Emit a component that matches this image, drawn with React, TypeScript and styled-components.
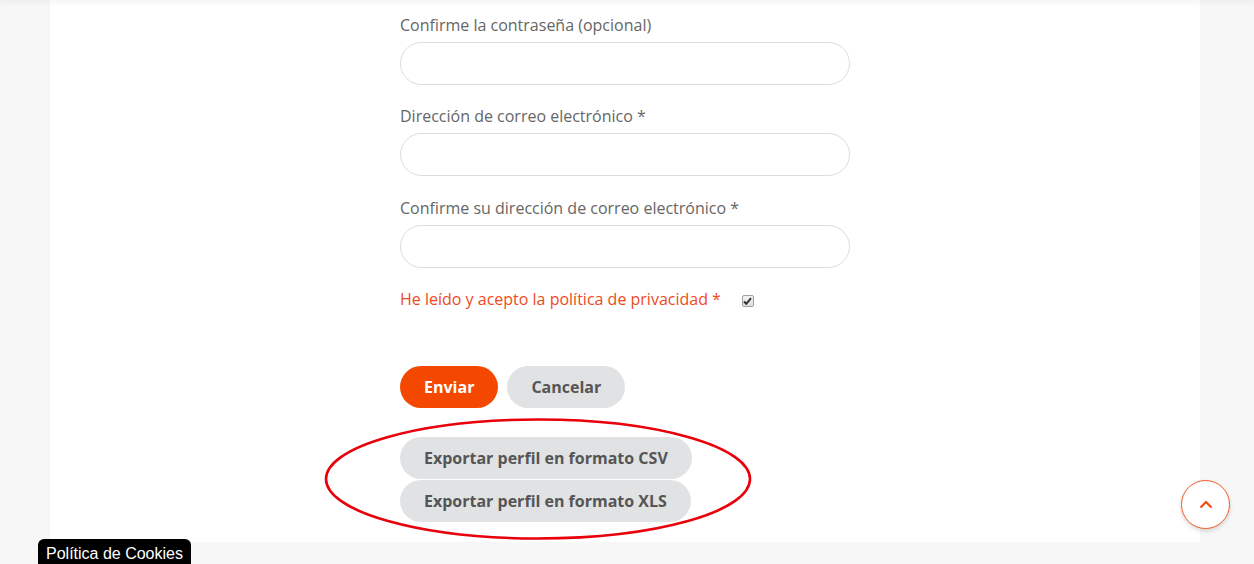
import { styled, createGlobalStyle } from "styled-components"

const Global = createGlobalStyle`
  html, body {
    margin: 0;
    padding: 0;
    height: 564px;
    overflow: hidden;
    background: #f7f7f7;
    font-family: "Open Sans", "Liberation Sans", sans-serif;
  }
  * { box-sizing: border-box; }
`

const fields = [
  "Confirme la contraseña (opcional)",
  "Dirección de correo electrónico *",
  "Confirme su dirección de correo electrónico *",
]

const App = () => {
  return (
    <Page>
      <Global />
      <Panel>
        <Form>
          {fields.map((f) => (
            <Field key={f}>
              <Label>{f}</Label>
              <Input type="text" />
            </Field>
          ))}
          <Privacy>
            <PrivacyText>He leído y acepto la política de privacidad *</PrivacyText>
            <Check>
              <svg width="9" height="8" viewBox="0 0 9 8">
                <path d="M1 4.5 L3.3 6.8 L8 1.2" fill="none" stroke="#333" strokeWidth="2" />
              </svg>
            </Check>
          </Privacy>
          <Actions>
            <Button $primary>Enviar</Button>
            <Button>Cancelar</Button>
          </Actions>
          <Exports>
            <Mark width="430" height="126" viewBox="0 0 430 126">
              <ellipse cx="215" cy="61" rx="212" ry="59.5" fill="none" stroke="#e8000b" strokeWidth="2.6" />
            </Mark>
            <Button>Exportar perfil en formato CSV</Button>
            <Button>Exportar perfil en formato XLS</Button>
          </Exports>
        </Form>
      </Panel>
      <ToTop>
        <svg width="14" height="9" viewBox="0 0 14 9">
          <path d="M1.5 7.5 L7 2 L12.5 7.5" fill="none" stroke="#f24a12" strokeWidth="2.2" />
        </svg>
      </ToTop>
      <Cookies>Política de Cookies</Cookies>
    </Page>
  )
}

export default App

const Page = styled.div`
width: 100%;
height: 564px;
position: relative;
box-shadow: inset 0 8px 8px -8px rgba(0,0,0,0.08);
`

const Panel = styled.div`
width: 1150px;
height: 542px;
margin-left: 50px;
background: #fff;
padding: 12.5px 0 0 350px;
box-shadow: inset 0 8px 8px -8px rgba(0,0,0,0.08);
`

const Form = styled.div`
width: 450px;
display: flex;
flex-direction: column;
`

const Field = styled.div`
display: flex;
flex-direction: column;
margin-bottom: 19.5px;
`

const Label = styled.label`
font-size: 16px;
line-height: 24px;
color: #666;
margin-bottom: 5px;
`

const Input = styled.input`
width: 450px;
height: 43px;
border: 1px solid #dcdcdc;
border-radius: 22px;
outline: none;
padding: 0 20px;
font-size: 16px;
background: #fff;
`

const Privacy = styled.div`
display: flex;
align-items: center;
height: 24px;
`

const PrivacyText = styled.span`
font-size: 16px;
line-height: 24px;
color: #ee4a1c;
`

const Check = styled.span`
width: 12px;
height: 12px;
margin-left: 21px;
margin-top: 3px;
border: 1px solid #a0a0a0;
border-radius: 2px;
background: linear-gradient(#f4f4f4, #dedede);
display: flex;
align-items: center;
justify-content: center;
`

const Actions = styled.div`
display: flex;
gap: 9px;
margin-top: 55px;
`

const Button = styled.div<{ $primary?: boolean }>`
height: 42px;
padding: 0 24px;
border-radius: 21px;
display: flex;
align-items: center;
align-self: flex-start;
font-size: 16px;
font-weight: 700;
color: ${(p) => (p.$primary ? "#fff" : "#555")};
background: ${(p) => (p.$primary ? "#f44800" : "#e1e2e4")};
cursor: pointer;
`

const Exports = styled.div`
position: relative;
display: flex;
flex-direction: column;
align-items: flex-start;
gap: 1px;
margin-top: 29px;
`

const Mark = styled.svg`
position: absolute;
left: -77px;
top: -19px;
pointer-events: none;
`

const ToTop = styled.div`
position: fixed;
left: 1181px;
top: 480px;
width: 49px;
height: 49px;
border-radius: 50%;
border: 1.5px solid #f05a28;
background: #fff;
box-shadow: 0 2px 4px rgba(0,0,0,0.15);
display: flex;
align-items: center;
justify-content: center;
`

const Cookies = styled.div`
position: fixed;
left: 38px;
bottom: 0;
height: 25px;
padding: 0 8px;
border-radius: 6px 6px 0 0;
background: #000;
color: #fff;
font-family: "Liberation Sans", Arial, sans-serif;
font-size: 16px;
line-height: 29px;
`
